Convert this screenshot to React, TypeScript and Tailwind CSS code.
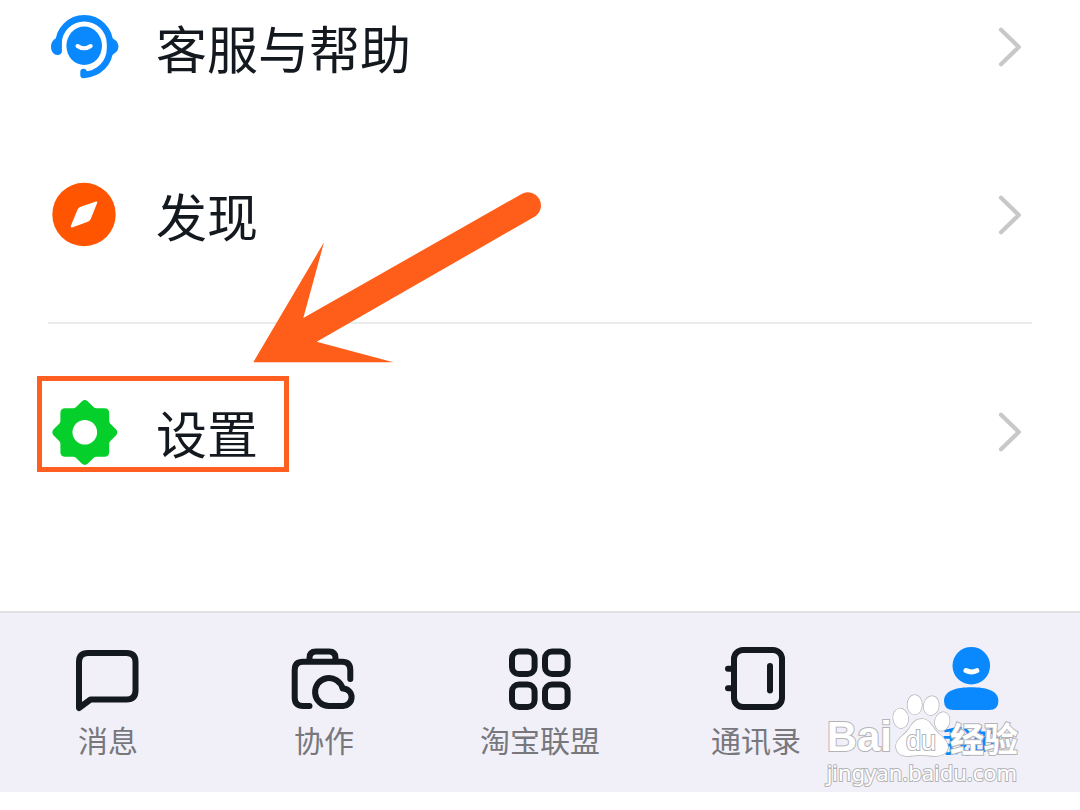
import type { ReactNode } from "react";

const strokeProps = {
  fill: "none",
  stroke: "currentColor",
  strokeWidth: 6,
  strokeLinecap: "round",
  strokeLinejoin: "round",
} as const;

const SupportIcon = () => (
  <svg viewBox="0 0 72 72" className="size-[72px] shrink-0 text-[#0a89ff]" aria-hidden="true">
    <path
      d="M10.5 40V33A25.7 25.7 0 0 1 62 33V37C62 52 51 63 35.5 64V61"
      {...strokeProps}
      strokeWidth={6.4}
    />
    <path d="M12 26C6 27 3 31 3 35.5C3 41 6 44 9.5 44Q13.7 44 13.7 40V30Z" fill="currentColor" />
    <path d="M60 25Q70.5 29 70.5 35.5Q70.5 42 60 46Z" fill="currentColor" />
    <ellipse cx="36.2" cy="34.8" rx="17.8" ry="19.2" fill="currentColor" />
    <path d="M29.5 35Q36 39.6 42.7 35" {...strokeProps} stroke="#fff" strokeWidth={4} />
  </svg>
);

const DiscoverIcon = () => (
  <svg viewBox="0 0 72 72" className="size-[72px] shrink-0 text-[#ff5500]" aria-hidden="true">
    <circle cx="36" cy="35.5" r="31.7" fill="currentColor" />
    <path
      d="M48.3 23.5L33 28.8Q31.3 29.4 30.5 31L23.7 47.5L39.5 41.8Q41 41.2 41.8 39.6Z"
      fill="#fff"
      stroke="#fff"
      strokeWidth={2}
      strokeLinejoin="round"
    />
  </svg>
);

const SettingsIcon = () => (
  <svg viewBox="0 0 72 72" className="size-[72px] shrink-0 text-[#05cf2b]" aria-hidden="true">
    <path
      d="M34 5.2Q36.8 2.8 39.6 5.2L45.5 11Q46.8 12.2 48.5 12.2H56.4Q61.2 12.2 61.2 17V25Q61.2 26.6 62.4 27.8L68.2 33.6Q70.4 36.4 68.2 39.2L62.4 45Q61.2 46.2 61.2 47.8V56Q61.2 60.8 56.4 60.8H48.5Q46.8 60.8 45.5 62L39.6 67.8Q36.8 70 34 67.8L28.1 62Q26.8 60.8 25.1 60.8H17.2Q12.4 60.8 12.4 56V47.8Q12.4 46.2 11.2 45L5.4 39.2Q3.2 36.4 5.4 33.6L11.2 27.8Q12.4 26.6 12.4 25V17Q12.4 12.2 17.2 12.2H25.1Q26.8 12.2 28.1 11Z"
      fill="currentColor"
    />
    <circle cx="36.8" cy="36.3" r="12.3" fill="#fff" />
  </svg>
);

const Chevron = () => (
  <svg
    viewBox="0 0 24 44"
    className="mr-2 ml-auto h-11 w-6 overflow-visible text-[#c8c8c8]"
    aria-hidden="true"
  >
    <path d="M1 4.7L18.8 22L1 39.3" {...strokeProps} strokeWidth={4.2} />
  </svg>
);

const MessageIcon = () => (
  <svg viewBox="0 0 72 72" className="size-[72px]" aria-hidden="true">
    <path d="M7 65V19Q7 10 16 10H54.5Q63.5 10 63.5 19V47.5Q63.5 56.5 54.5 56.5H18.5Z" {...strokeProps} />
  </svg>
);

const WorkIcon = () => (
  <svg viewBox="0 0 72 72" className="size-[72px]" aria-hidden="true">
    <g {...strokeProps}>
      <path d="M21.5 63H15Q6.7 63 6.7 54.7V27Q6.7 18.7 15 18.7H54Q62.3 18.7 62.3 27V36" />
      <path d="M21.5 18V15Q21.5 8.5 28 8.5H41Q47.5 8.5 47.5 15V18" />
      <path d="M41.3 63H55A8.8 8.8 0 0 0 54.6 45.4A14 14 0 1 0 41.3 63Z" />
    </g>
  </svg>
);

const GridIcon = () => (
  <svg viewBox="0 0 72 72" className="size-[72px]" aria-hidden="true">
    <g {...strokeProps}>
      <rect x="8" y="8.5" width="22.6" height="22.4" rx="7" />
      <rect x="41" y="8.5" width="22.6" height="22.4" rx="7" />
      <rect x="8" y="41.5" width="22.6" height="22.4" rx="7" />
      <rect x="41" y="41.5" width="22.6" height="22.4" rx="7" />
    </g>
  </svg>
);

const ContactsIcon = () => (
  <svg viewBox="0 0 72 72" className="size-[72px]" aria-hidden="true">
    <g {...strokeProps}>
      <rect x="14" y="7" width="48" height="57" rx="9" />
      <path d="M8 25.7H14M8 45.3H14M50 23V47.5" />
    </g>
  </svg>
);

const ProfileIcon = () => (
  <svg viewBox="0 0 72 72" className="size-[72px]" aria-hidden="true">
    <circle cx="35.3" cy="22.7" r="18.8" fill="currentColor" />
    <path
      d="M35.3 44.3C50 44.3 62.4 47.5 62.4 58Q62.4 67 53 67H17.5Q8 67 8 58C8 47.5 20.5 44.3 35.3 44.3Z"
      fill="currentColor"
    />
    <path d="M30 27.6Q35.5 30.4 40.8 27.6" {...strokeProps} stroke="#fff" strokeWidth={5} />
  </svg>
);

interface MenuRowProps {
  icon: ReactNode;
  label: string;
}

const MenuRow = ({ icon, label }: MenuRowProps) => (
  <button type="button" className="flex h-[94px] w-full items-center gap-9 px-12 text-left">
    {icon}
    <span className="text-[51px] leading-[60px] whitespace-nowrap">{label}</span>
    <Chevron />
  </button>
);

const tabs = [
  { label: "消息", icon: <MessageIcon /> },
  { label: "协作", icon: <WorkIcon /> },
  { label: "淘宝联盟", icon: <GridIcon /> },
  { label: "通讯录", icon: <ContactsIcon /> },
  { label: "我的", icon: <ProfileIcon />, active: true },
];

const Watermark = () => (
  <div className="pointer-events-none absolute top-[79px] right-[59px] text-white [paint-order:stroke] [-webkit-text-stroke:2px_#b4b4b8]">
    <div className="mr-[3px] flex h-[68px] items-end justify-end">
      <span className="font-['Liberation_Sans'] text-[42px] leading-[46px] font-bold">Bai</span>
      <div className="relative h-[66px] w-[58px]">
        <svg viewBox="0 0 58 66" className="h-[66px] w-[58px] overflow-visible" aria-hidden="true">
          <g fill="#fff" stroke="#b4b4b8" strokeWidth="1.4">
            <ellipse cx="8.7" cy="24.3" rx="7.5" ry="9.8" transform="rotate(-8 8.7 24.3)" />
            <ellipse cx="22.7" cy="10.7" rx="7.2" ry="9.8" />
            <ellipse cx="39.3" cy="11.7" rx="7.5" ry="9.6" transform="rotate(10 39.3 11.7)" />
            <ellipse cx="50.3" cy="27.5" rx="7.3" ry="9.4" transform="rotate(12 50.3 27.5)" />
            <path d="M30 25C38 25 40 33 45 38C50 43 56 47 56 53C56 59 50 62 44 62C38 62 34 61 29 61C24 61 21 62 15 62C8 62 4 58 4 52C4 45 12 42 17 35C20 30 23 25 30 25Z" />
          </g>
        </svg>
        <span className="absolute inset-x-0 bottom-1 text-center font-['Liberation_Sans'] text-[27px] leading-[30px]">
          du
        </span>
      </div>
      <span className="text-[34px] leading-[44px] font-bold">经验</span>
    </div>
    <p className="font-['Noto_Sans'] text-[22px] leading-6">jingyan.baidu.com</p>
  </div>
);

export default function App() {
  return (
    <div className="min-h-screen w-full bg-white font-['Noto_Sans_CJK_SC',sans-serif] text-[#14191f]">
      <main className="relative pb-[132px]">
        <div className="flex flex-col gap-[74px]">
          <MenuRow icon={<SupportIcon />} label="客服与帮助" />
          <MenuRow icon={<DiscoverIcon />} label="发现" />
        </div>
        <hr className="mx-12 mt-[60px] mb-[61px] border-t-2 border-[#ebebeb]" />
        <div className="relative">
          <MenuRow icon={<SettingsIcon />} label="设置" />
          <div className="pointer-events-none absolute -top-[9px] left-[37px] h-24 w-[252px] border-5 border-[#ff6022]" />
        </div>

        {/* Pointer to the settings row */}
        <svg
          viewBox="0 0 288 171"
          className="pointer-events-none absolute top-48 left-[253px] h-[171px] w-72"
          aria-hidden="true"
        >
          <path
            d="M0.3 170.3L71 50.3L50.3 126L268.2 2.2A13 13 0 0 1 281.5 24.8L63.7 149.7L140.3 170.3Z"
            fill="#ff5e1a"
          />
        </svg>
      </main>

      <nav className="relative grid h-[181px] grid-cols-5 border-t-2 border-[#e2e1e6] bg-[#f1f0f9]">
        {tabs.map((tab) => (
          <button
            key={tab.label}
            type="button"
            className={
              tab.active
                ? "flex flex-col items-center pt-[30px] text-[#0a89ff]"
                : "flex flex-col items-center pt-[30px]"
            }
          >
            {tab.icon}
            <span
              className={
                tab.active
                  ? "mt-1 text-[30px] leading-10 font-medium"
                  : "mt-1 text-[30px] leading-10 text-[#77777c]"
              }
            >
              {tab.label}
            </span>
          </button>
        ))}
        <Watermark />
      </nav>
    </div>
  );
}
